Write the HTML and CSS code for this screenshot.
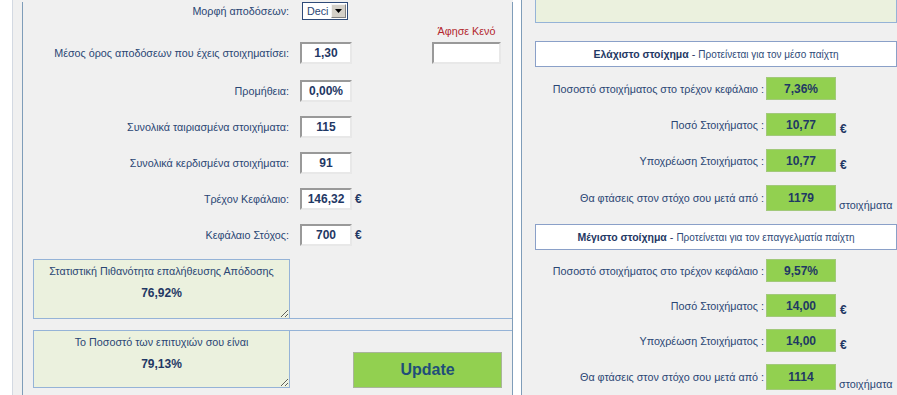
FILE: index.html
```html
<!DOCTYPE html>
<html>
<head>
    <title>Υπολογισμός Στοιχήματος</title>
    <link rel="stylesheet" href="styles.css">
</head>
<body>

    <div class="page">

        <!-- Left panel: inputs -->
        <div class="left">
            <div class="left-inner">

                <div class="form-row row-type">
                    <label class="lbl">Μορφή αποδόσεων:</label>
                    <div class="select">
                        <span class="select-text">Deci</span>
                        <span class="select-arrow">
                            <svg width="7" height="4" viewBox="0 0 7 4"><path d="M0 0h7L3.5 4z" fill="#000"/></svg>
                        </span>
                    </div>
                </div>

                <div class="form-row row-avg">
                    <label class="lbl">Μέσος όρος αποδόσεων που έχεις στοιχηματίσει:</label>
                    <input class="field" type="text" value="1,30">
                    <div class="blank">
                        <span class="blank-label">Άφησε Κενό</span>
                        <input class="field field-blank" type="text" value="">
                    </div>
                </div>

                <div class="form-row row-fee">
                    <label class="lbl">Προμήθεια:</label>
                    <input class="field" type="text" value="0,00%">
                </div>

                <div class="form-row">
                    <label class="lbl">Συνολικά ταιριασμένα στοιχήματα:</label>
                    <input class="field" type="text" value="115">
                </div>

                <div class="form-row">
                    <label class="lbl">Συνολικά κερδισμένα στοιχήματα:</label>
                    <input class="field" type="text" value="91">
                </div>

                <div class="form-row">
                    <label class="lbl">Τρέχον Κεφάλαιο:</label>
                    <input class="field" type="text" value="146,32">
                    <span class="euro">€</span>
                </div>

                <div class="form-row">
                    <label class="lbl">Κεφάλαιο Στόχος:</label>
                    <input class="field" type="text" value="700">
                    <span class="euro">€</span>
                </div>

                <!-- Results -->
                <div class="result-row first">
                    <div class="result-box">
                        <div class="result-title">Στατιστική Πιθανότητα επαλήθευσης Απόδοσης</div>
                        <div class="result-value">76,92%</div>
                    </div>
                    <div class="result-side side-top"></div>
                </div>

                <div class="result-row second">
                    <div class="result-box">
                        <div class="result-title">Το Ποσοστό των επιτυχιών σου είναι</div>
                        <div class="result-value">79,13%</div>
                    </div>
                    <div class="result-side side-bottom">
                        <button class="update" type="button">Update</button>
                    </div>
                </div>

            </div>
        </div>

        <!-- Right panel: suggested stakes -->
        <div class="right">
            <div class="top-box"></div>

            <div class="bet-header">
                <b>Ελάχιστο στοίχημα</b> - <span>Προτείνεται για τον μέσο παίχτη</span>
            </div>

            <div class="bet-section">
                <div class="bet-row">
                    <span class="bet-label">Ποσοστό στοιχήματος στο τρέχον κεφάλαιο :</span>
                    <span class="bet-value">7,36%</span>
                </div>
                <div class="bet-row">
                    <span class="bet-label">Ποσό Στοιχήματος :</span>
                    <span class="bet-value">10,77</span>
                    <span class="bet-euro">€</span>
                </div>
                <div class="bet-row">
                    <span class="bet-label">Υποχρέωση Στοιχήματος :</span>
                    <span class="bet-value">10,77</span>
                    <span class="bet-euro">€</span>
                </div>
                <div class="bet-row tall">
                    <span class="bet-label">Θα φτάσεις στον στόχο σου μετά από :</span>
                    <span class="bet-value">1179</span>
                    <span class="bet-unit">στοιχήματα</span>
                </div>
            </div>

            <div class="bet-header second">
                <b>Μέγιστο στοίχημα</b> - <span>Προτείνεται για τον επαγγελματία παίχτη</span>
            </div>

            <div class="bet-section tight">
                <div class="bet-row">
                    <span class="bet-label">Ποσοστό στοιχήματος στο τρέχον κεφάλαιο :</span>
                    <span class="bet-value">9,57%</span>
                </div>
                <div class="bet-row">
                    <span class="bet-label">Ποσό Στοιχήματος :</span>
                    <span class="bet-value">14,00</span>
                    <span class="bet-euro">€</span>
                </div>
                <div class="bet-row">
                    <span class="bet-label">Υποχρέωση Στοιχήματος :</span>
                    <span class="bet-value">14,00</span>
                    <span class="bet-euro">€</span>
                </div>
                <div class="bet-row tall">
                    <span class="bet-label">Θα φτάσεις στον στόχο σου μετά από :</span>
                    <span class="bet-value">1114</span>
                    <span class="bet-unit">στοιχήματα</span>
                </div>
            </div>
        </div>

    </div>

</body>
</html>
```

FILE: styles.css
```css
/* General */
body {
    margin: 0;
    background: #fff;
    font-family: "Liberation Sans", Arial, sans-serif;
    font-size: 10.75px;
    color: #2a4674;
    overflow: hidden;
}

.page {
    display: flex;
    align-items: flex-start;
    padding-left: 12px;
    height: 395px;
}

/* Left panel */
.left {
    height: 100%;
    border-left: 1px solid #d3d9e2;
    padding-left: 9px;
    background: #f0f0f0;
}

.left-inner {
    width: 489px;
    height: 100%;
    border-left: 1px solid #7f9db9;
    border-right: 1px solid #7f9db9;
    box-sizing: content-box;
}

.form-row {
    display: flex;
    align-items: center;
    height: 22px;
    margin-top: 14px;
}

.form-row .lbl {
    width: 266px;
    text-align: right;
    margin-right: 11px;
}

.row-type {
    height: 18px;
    margin-top: 2px;
}

.row-type .lbl {
    margin-right: 13px;
}

.row-avg {
    height: auto;
    align-items: flex-end;
    margin-top: 4px;
}

.row-avg .lbl {
    line-height: 22px;
}

.row-fee {
    margin-top: 16px;
}

.field {
    width: 52px;
    height: 22px;
    box-sizing: border-box;
    margin: 0;
    padding: 0;
    border: 2px solid;
    border-color: #999 #e8e8e8 #e8e8e8 #999;
    background: #fff;
    font-family: "Liberation Sans", Arial, sans-serif;
    font-size: 12px;
    font-weight: bold;
    color: #1f3864;
    text-align: center;
}

.euro {
    margin-left: 3px;
    font-size: 12px;
    font-weight: bold;
    color: #1f3864;
}

/* Select */
.select {
    display: flex;
    align-items: center;
    width: 46px;
    height: 18px;
    box-sizing: border-box;
    border: 1px solid #2e4a78;
    background: #fff;
    padding: 1px;
}

.select-text {
    flex: 1;
    padding-left: 3px;
    color: #2a4674;
}

.select-arrow {
    display: flex;
    align-items: center;
    justify-content: center;
    width: 15px;
    height: 14px;
    background: #d4d0c8;
    border: 1px solid;
    border-color: #f4f4f4 #808080 #808080 #f4f4f4;
    box-sizing: border-box;
}

/* Blank field */
.blank {
    display: flex;
    flex-direction: column;
    align-items: center;
    margin-left: 80px;
}

.blank-label {
    color: #b3262d;
    line-height: 14px;
    margin-bottom: 4px;
}

.field-blank {
    width: 69px;
}

/* Results */
.result-row {
    display: flex;
}

.result-row.first {
    margin-top: 13px;
    height: 60px;
}

.result-row.second {
    margin-top: 11px;
    height: 58px;
}

.result-box {
    width: 257px;
    margin-left: 10px;
    box-sizing: border-box;
    border: 1px solid #95b3d7;
    background: #ebf1de;
    text-align: center;
    resize: both;
    overflow: hidden;
    padding-top: 4px;
}

.result-title {
    line-height: 14px;
}

.result-value {
    margin-top: 8px;
    font-size: 12px;
    font-weight: bold;
    color: #1f3864;
}

.result-side {
    flex: 1;
    box-sizing: border-box;
}

.side-top {
    border-bottom: 1px solid #95b3d7;
}

.side-bottom {
    border-top: 1px solid #95b3d7;
    padding: 21px 0 0 63px;
}

.update {
    width: 149px;
    height: 36px;
    margin: 0;
    border: 1px solid #a9b59a;
    background: #92d050;
    font-family: "Liberation Sans", Arial, sans-serif;
    font-size: 16px;
    font-weight: bold;
    color: #1f4e79;
    cursor: pointer;
}

/* Right panel */
.right {
    flex: 1;
    height: 100%;
    margin-left: 8px;
    border-left: 1px solid #7f9db9;
    background: #f0f0f0;
    padding-left: 13px;
}

.top-box {
    width: 362px;
    height: 23px;
    box-sizing: border-box;
    border: 1px solid #95b3d7;
    border-top: none;
    background: #ebf1de;
}

.bet-header {
    width: 362px;
    height: 26px;
    box-sizing: border-box;
    margin-top: 18px;
    border: 1px solid #8aa0c8;
    background: #fff;
    display: flex;
    align-items: center;
    justify-content: center;
    white-space: pre;
    color: #1f3864;
}

.bet-header b {
    font-size: 10.5px;
    color: #1f3864;
}

.bet-header span {
    font-size: 10px;
    color: #2e4a78;
}

.bet-header.second {
    margin-top: 12px;
}

.bet-section {
    padding-top: 10px;
}

.bet-section.tight {
    padding-top: 9px;
}

.bet-row {
    display: flex;
    align-items: center;
    height: 23px;
    margin-bottom: 13px;
}

.bet-section.tight .bet-row {
    margin-bottom: 12px;
}

.bet-row.tall {
    height: 26px;
}

.bet-label {
    width: 229px;
    text-align: right;
    margin-right: 2px;
    color: #2a4674;
}

.bet-value {
    width: 70px;
    height: 100%;
    box-sizing: border-box;
    border: 1px solid #a2c97a;
    background: #92d050;
    display: flex;
    align-items: center;
    justify-content: center;
    font-size: 12px;
    font-weight: bold;
    color: #1f3864;
}

.bet-euro {
    align-self: flex-end;
    margin-left: 4px;
    font-size: 12px;
    font-weight: bold;
    color: #1f3864;
}

.bet-unit {
    align-self: flex-end;
    margin-left: 3px;
    color: #2a4674;
}
```
